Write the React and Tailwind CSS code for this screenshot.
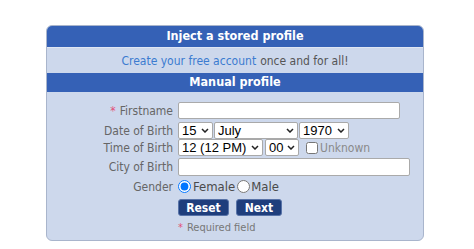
import React, { useState } from 'react';

const label = "w-[131px] shrink-0 pr-[5px] text-right text-[12px] leading-none text-[#666]";
const selectFont = { fontFamily: '"Liberation Sans Narrow", "Liberation Sans", sans-serif' };

const Chevron = () => (
    <svg className="absolute right-[4px] top-[6px] pointer-events-none" width="8" height="5" viewBox="0 0 8 5">
        <path d="M1 1l3 3 3-3" fill="none" stroke="#222" strokeWidth="1.5" />
    </svg>
);

const Select = ({ width, value, options }) => (
    <span className="relative inline-block">
        <select
            defaultValue={value}
            className={`appearance-none block h-[17px] m-0 py-0 pl-[3px] pr-[12px] text-[13px] leading-[15px] text-black bg-white border border-[#a9a9a9] rounded-[2px] ${width}`}
            style={selectFont}
        >
            {options.map((o) => <option key={o} value={o}>{o}</option>)}
        </select>
        <Chevron />
    </span>
);

const Row = ({ title, required, className = '', children }) => (
    <div className={`flex items-center ${className}`}>
        <div className={label}>
            {required && <span className="text-[#e2507a] mr-[4px]">*</span>}
            {title}
        </div>
        <div className="flex items-center gap-[1px]">{children}</div>
    </div>
);

const App = () => {
    const [gender, setGender] = useState('female');
    const days = Array.from({ length: 31 }, (_, i) => String(i + 1));
    const months = ['January', 'February', 'March', 'April', 'May', 'June', 'July', 'August', 'September', 'October', 'November', 'December'];

    return (
        <div
            className="w-[474px] h-[249px] bg-white pt-[25px] pl-[46px]"
            style={{ fontFamily: '"DejaVu Sans Condensed", "DejaVu Sans", sans-serif' }}
        >
            <div className="w-[378px] rounded-[6px] border border-[#a9b5cc] bg-[#cdd8ec] overflow-hidden">
                <div className="h-[21px] bg-[#3561b6] flex items-center justify-center text-white font-bold text-[12.5px]">
                    Inject a stored profile
                </div>
                <div className="h-[26px] flex items-center justify-center text-[12px] text-[#555] border-t border-[#dfe6f3]">
                    <a href="#" className="text-[#3b7bd0] mr-[4px]">Create your free account</a>
                    once and for all!
                </div>
                <div className="h-[19px] bg-[#3561b6] flex items-center justify-center text-white font-bold text-[12.5px]">
                    Manual profile
                </div>

                <form className="flex flex-col pb-[6px]">
                    <Row title="Firstname" required className="mt-[10px] h-[17px]">
                        <input type="text" className="w-[222px] h-[17px] bg-white border border-[#aaa] rounded-[2px]" />
                    </Row>
                    <Row title="Date of Birth" className="mt-[3px] h-[17px]">
                        <Select width="w-[35px]" value="15" options={days} />
                        <Select width="w-[84px]" value="July" options={months} />
                        <Select width="w-[50px]" value="1970" options={['1969', '1970', '1971']} />
                    </Row>
                    <Row title="Time of Birth" className="h-[17px]">
                        <Select width="w-[85px]" value="12 (12 PM)" options={['11 (11 AM)', '12 (12 PM)', '13 (1 PM)']} />
                        <span className="ml-[1px] flex">
                            <Select width="w-[34px]" value="00" options={['00', '15', '30', '45']} />
                        </span>
                        <label className="flex items-center ml-[6px] text-[12px] text-[#8a8a8a]">
                            <input type="checkbox" className="m-0 mr-[2px] w-[12px] h-[12px]" />
                            Unknown
                        </label>
                    </Row>
                    <Row title="City of Birth" className="mt-[2px] h-[18px]">
                        <input type="text" className="w-[232px] h-[18px] bg-white border border-[#aaa] rounded-[2px]" />
                    </Row>
                    <Row title="Gender" className="mt-[2px] h-[17px]">
                        <label className="flex items-center text-[13px] text-[#4a4a4a]">
                            <input
                                type="radio"
                                name="gender"
                                checked={gender === 'female'}
                                onChange={() => setGender('female')}
                                className="m-0 mr-[2px] w-[13px] h-[13px]"
                            />
                            Female
                        </label>
                        <label className="flex items-center ml-[1px] text-[13px] text-[#4a4a4a]">
                            <input
                                type="radio"
                                name="gender"
                                checked={gender === 'male'}
                                onChange={() => setGender('male')}
                                className="m-0 mr-[1px] w-[13px] h-[13px]"
                            />
                            Male
                        </label>
                    </Row>
                    <div className="flex mt-[4px] h-[17px] pl-[131px] gap-[7px]">
                        <button type="reset" className="w-[51px] h-[17px] bg-[#1f3e7c] border border-[#5873a8] rounded-[3px] text-white font-bold text-[12px] leading-none">
                            Reset
                        </button>
                        <button type="button" className="w-[46px] h-[17px] bg-[#1f3e7c] border border-[#5873a8] rounded-[3px] text-white font-bold text-[12px] leading-none">
                            Next
                        </button>
                    </div>
                    <div className="mt-[6px] h-[12px] pl-[131px] text-[11px] leading-[12px] text-[#777]">
                        <span className="text-[#e2507a] mr-[4px]">*</span>Required field
                    </div>
                </form>
            </div>
        </div>
    );
};

export default App;
